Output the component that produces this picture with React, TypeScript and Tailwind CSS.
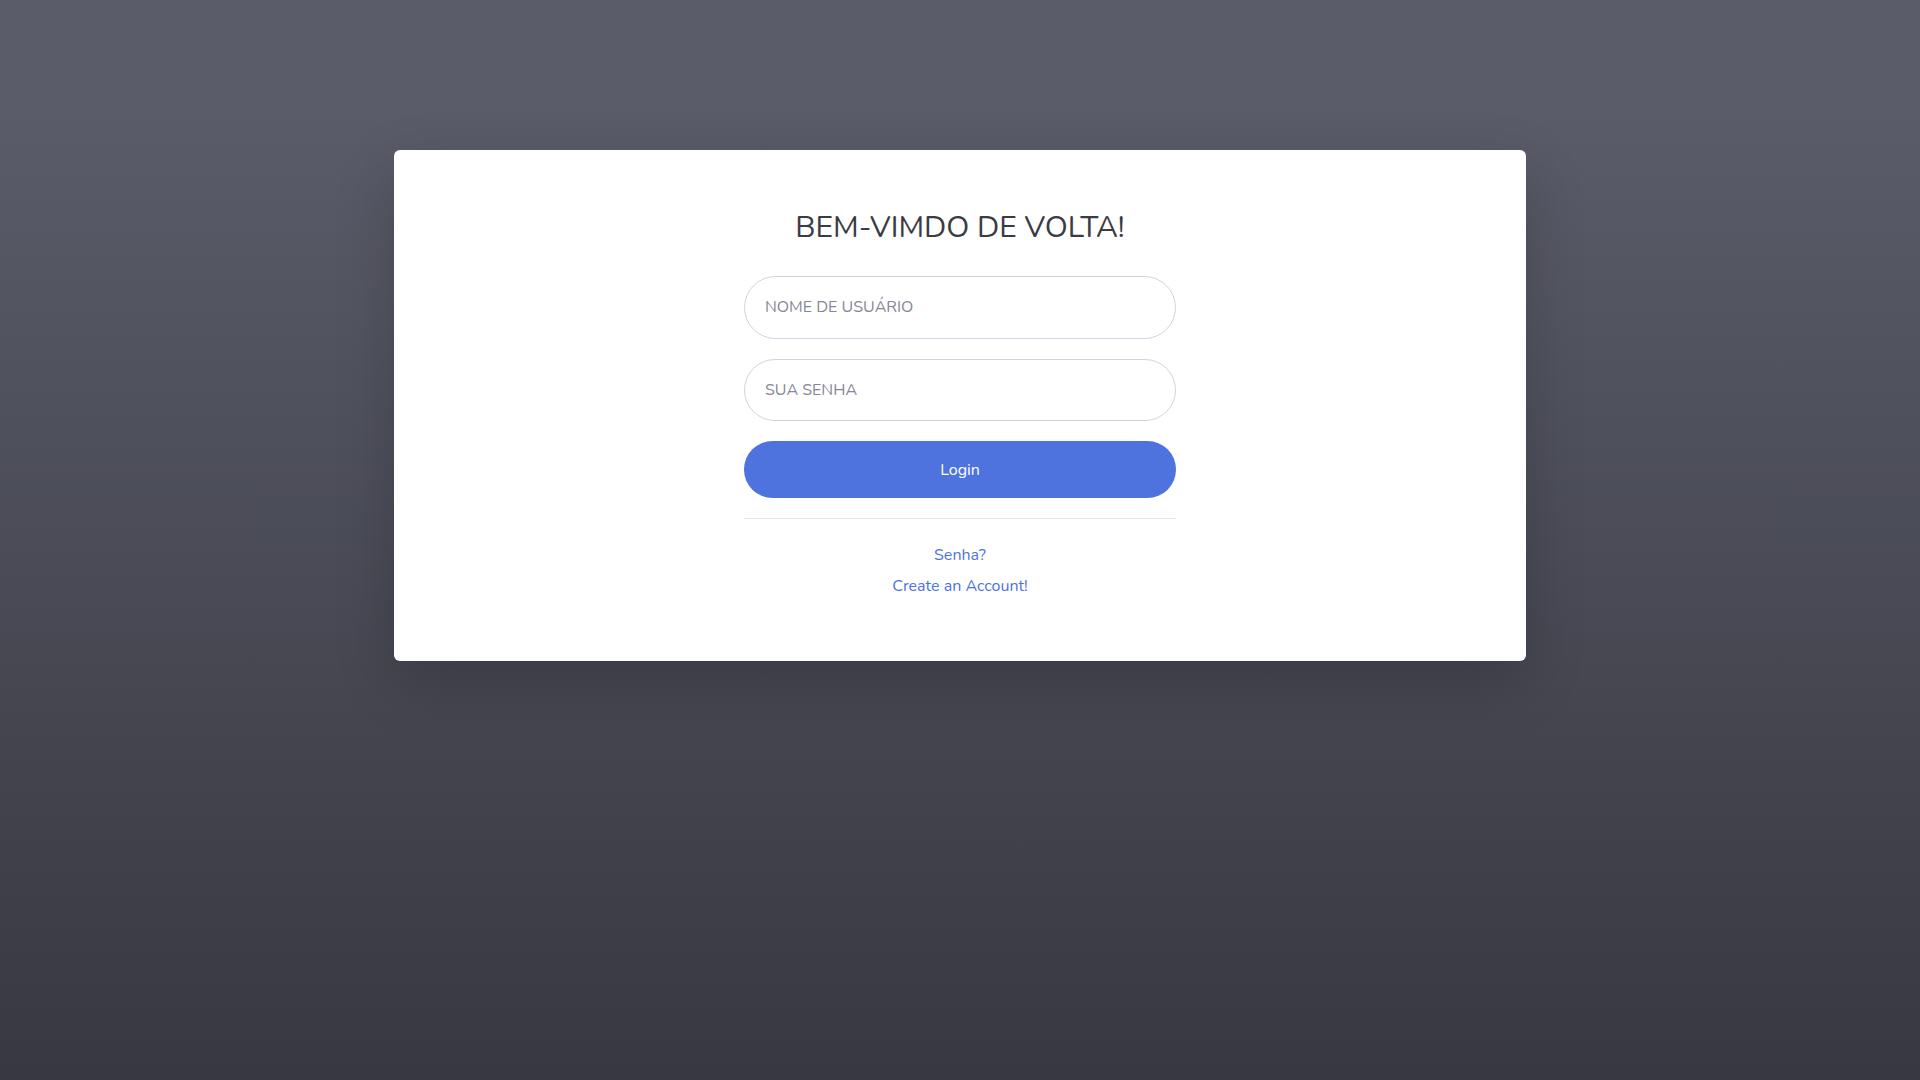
export default function App() {
  return (
    <div className="min-h-screen bg-[linear-gradient(180deg,#5a5c69_10%,#373840_100%)] pt-[150px] font-['Nunito','Lato',sans-serif]">
      <div className="mx-auto w-[1132px] rounded-[6px] bg-white shadow-[0_20px_60px_rgba(0,0,0,0.175)]">
        <div className="mx-auto w-[552px] px-[60px] pt-[60px] pb-[59.5px]">
          <h1 className="mb-[30px] text-center text-[30px] leading-[36px] font-normal text-[#3a3b45]">
            BEM-VIMDO DE VOLTA!
          </h1>
          <form className="flex flex-col" onSubmit={(e) => e.preventDefault()}>
            <input
              type="text"
              placeholder="NOME DE USUÁRIO"
              className="mb-5 h-[62.5px] rounded-full border border-[#d1d3e2] px-5 text-[16px] text-[#6e707e] outline-none placeholder:text-[#858796]"
            />
            <input
              type="password"
              placeholder="SUA SENHA"
              className="mb-5 h-[62.5px] rounded-full border border-[#d1d3e2] px-5 text-[16px] text-[#6e707e] outline-none placeholder:text-[#858796]"
            />
            <button
              type="submit"
              className="h-[57px] rounded-full bg-[#4e73df] text-[16px] text-white"
            >
              Login
            </button>
          </form>
          <hr className="my-5 border-t border-[#e3e6f0]" />
          <div className="text-center text-[20px] leading-[30px]">
            <a href="#" className="text-[16px] text-[#4e73df]">
              Senha?
            </a>
          </div>
          <div className="text-center text-[20px] leading-[30px]">
            <a href="#" className="text-[16px] text-[#4e73df]">
              Create an Account!
            </a>
          </div>
        </div>
      </div>
    </div>
  );
}
